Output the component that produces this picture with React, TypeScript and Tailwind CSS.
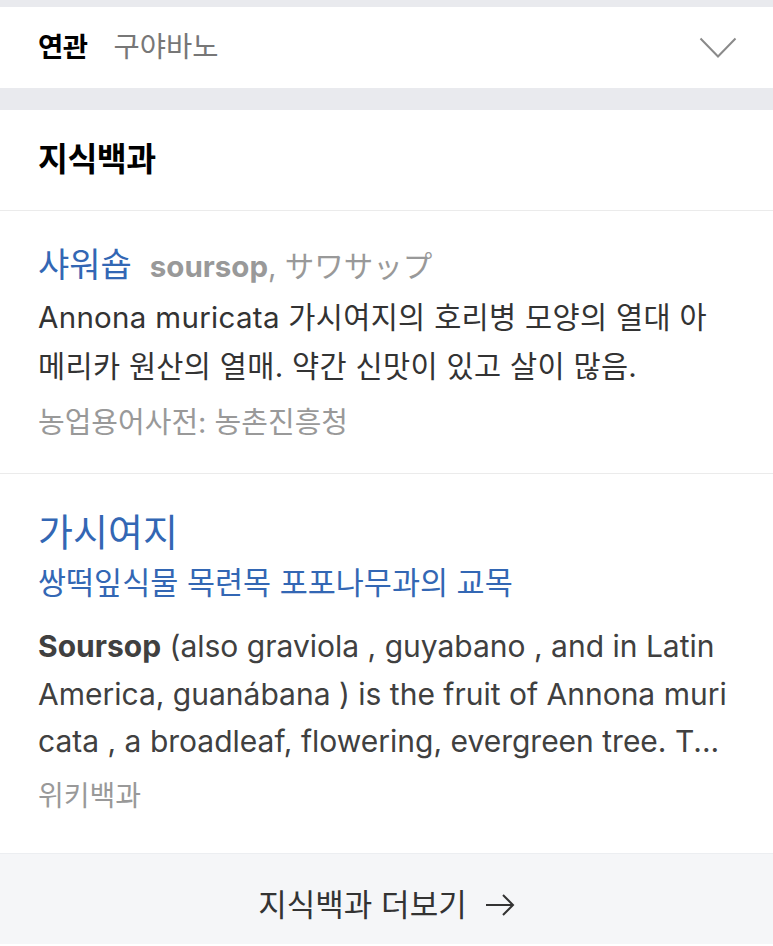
import React from "react";

const font = { fontFamily: '"Inter", "Noto Sans CJK KR", sans-serif' };

export default function App() {
  return (
    <div className="w-[773px] bg-[#e9eaee] pt-[7px]" style={font}>
      <div className="flex h-[81px] items-center justify-between bg-white pl-[38px] pr-[36px]">
        <div className="flex items-center gap-[26px]">
          <span className="text-[27.5px] font-bold tracking-[-0.5px] text-black">연관</span>
          <span className="text-[28.5px] text-[#777]">구야바노</span>
        </div>
        <svg width="38" height="22" viewBox="0 0 38 22" fill="none">
          <path d="M1.5 1.5 L19 19.5 L36.5 1.5" stroke="#8a8a8a" strokeWidth="2" />
        </svg>
      </div>
      <div className="mt-[22px] bg-white">
        <div className="flex h-[101px] items-center border-b border-[#ebebeb] pl-[38px]">
          <span className="text-[32.5px] font-bold tracking-[-0.5px] text-black">지식백과</span>
        </div>
        <div className="border-b border-[#ebebeb] px-[38px] pt-[31px] pb-[28px]">
          <div className="flex items-baseline leading-[46px] whitespace-nowrap">
            <span className="text-[34px] text-[#3367b4]">샤워숍</span>
            <span className="ml-[18px] text-[29.5px] font-bold text-[#999]">soursop</span>
            <span className="text-[29.5px] text-[#999]">, サワサップ</span>
          </div>
          <p className="mt-[4px] text-[29.5px] leading-[49px] text-[#333] whitespace-nowrap">
            <span className="block tracking-[0.3px]">Annona muricata 가시여지의 호리병 모양의 열대 아</span>
            <span className="block tracking-[0.3px]">메리카 원산의 열매. 약간 신맛이 있고 살이 많음.</span>
          </p>
          <p className="mt-[10px] text-[29px] leading-[44px] text-[#999]">농업용어사전: 농촌진흥청</p>
        </div>
        <div className="px-[38px] pt-[32px] pb-[33px]">
          <div className="text-[38px] leading-[52px] text-[#3367b4]">가시여지</div>
          <div className="text-[30.5px] leading-[50px] text-[#3367b4] whitespace-nowrap">쌍떡잎식물 목련목 포포나무과의 교목</div>
          <p className="mt-[15px] text-[30px] leading-[47.5px] text-[#404040] whitespace-nowrap">
            <span className="block"><span className="font-bold">Soursop</span> (also graviola , guyabano , and in Latin</span>
            <span className="block">America, guanábana ) is the fruit of Annona muri</span>
            <span className="block">cata , a broadleaf, flowering, evergreen tree. T...</span>
          </p>
          <p className="mt-[6px] text-[28px] leading-[48px] text-[#999]">위키백과</p>
        </div>
      </div>
      <div className="flex h-[91px] items-start justify-center border-t border-[#eceef1] bg-[#f5f6f8] pt-[31px]">
        <span className="text-[31px] leading-[40px] text-[#333]">지식백과 더보기</span>
        <svg className="ml-[18px] mt-[8px]" width="30" height="24" viewBox="0 0 30 24" fill="none">
          <path d="M1 12 H28 M18 2 L28 12 L18 22" stroke="#333" strokeWidth="2" />
        </svg>
      </div>
    </div>
  );
}
